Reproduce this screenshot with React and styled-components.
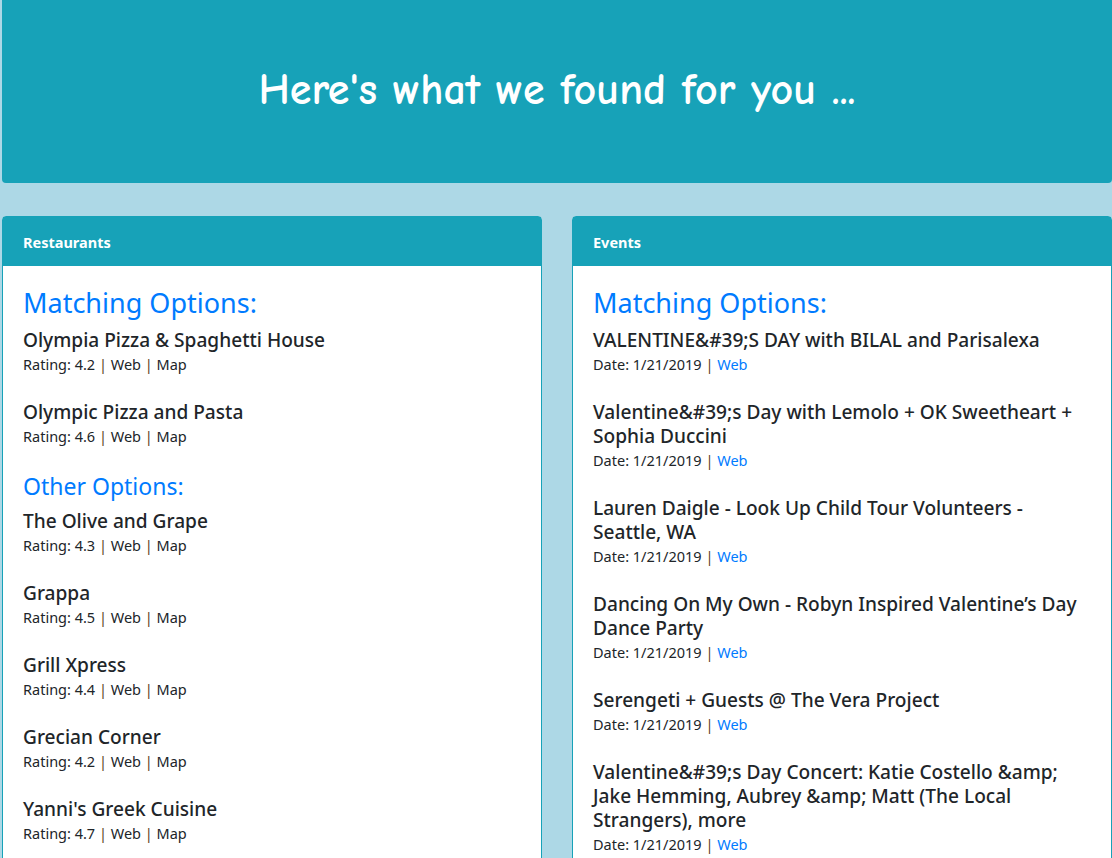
import styled, { createGlobalStyle } from "styled-components";

const GlobalStyle = createGlobalStyle`
  html, body {
    margin: 0;
    padding: 0;
    background-color: lightblue;
  }
  body {
    font-family: "Noto Sans", "Open Sans", sans-serif;
    color: #212529;
  }
`;

const Page = styled.div`
  padding: 0 0 0 2px;
  width: 1110px;
`;

const Jumbotron = styled.header`
  height: 183px;
  background-color: #17a2b8;
  border-radius: 0 0 4px 4px;
  display: flex;
  align-items: center;
  justify-content: center;
  margin-bottom: 33px;
`;

const Title = styled.h1`
  margin: 0 0 4px 0;
  color: white;
  font-family: "Comic Sans MS", "Comic Neue", "DejaVu Sans", sans-serif;
  font-weight: 700;
  font-size: 44px;
`;

const Columns = styled.div`
  display: grid;
  grid-template-columns: 540px 540px;
  gap: 30px;
`;

const Card = styled.section`
  background: white;
  border: 1px solid #17a2b8;
  border-radius: 4px 4px 0 0;
`;

const CardHeader = styled.div`
  background-color: #17a2b8;
  color: white;
  font-weight: 700;
  font-size: 14.5px;
  height: 49px;
  padding: 0 20px;
  display: flex;
  align-items: center;
`;

const CardBody = styled.div`
  padding: 20px 20px 40px;
`;

const SectionTitle = styled.h3`
  margin: 0 0 8px;
  color: #007bff;
  font-weight: 400;
  font-size: ${(p) => (p.$small ? "23px" : "27px")};
  line-height: ${(p) => (p.$small ? "29px" : "34px")};
`;

const Item = styled.div`
  margin-bottom: 24px;
`;

const ItemName = styled.h5`
  margin: 0;
  font-size: 19.1px;
  font-weight: 500;
  line-height: 24px;
`;

const Meta = styled.div`
  font-size: 14.5px;
  line-height: 24px;
  color: #212529;
`;

const Link = styled.a`
  color: ${(p) => (p.$blue ? "#007bff" : "#212529")};
  text-decoration: none;
`;

const Sep = styled.span`
  color: #5a3e1a;
`;

const matching = [
  { name: "Olympia Pizza & Spaghetti House", rating: "4.2" },
  { name: "Olympic Pizza and Pasta", rating: "4.6" },
];

const others = [
  { name: "The Olive and Grape", rating: "4.3" },
  { name: "Grappa", rating: "4.5" },
  { name: "Grill Xpress", rating: "4.4" },
  { name: "Grecian Corner", rating: "4.2" },
  { name: "Yanni's Greek Cuisine", rating: "4.7" },
  { name: "Mediterranean Kitchen", rating: "4.3" },
];

const events = [
  "VALENTINE&#39;S DAY with BILAL and Parisalexa",
  "Valentine&#39;s Day with Lemolo + OK Sweetheart + Sophia Duccini",
  "Lauren Daigle - Look Up Child Tour Volunteers - Seattle, WA",
  "Dancing On My Own - Robyn Inspired Valentine’s Day Dance Party",
  "Serengeti + Guests @ The Vera Project",
  "Valentine&#39;s Day Concert: Katie Costello &amp; Jake Hemming, Aubrey &amp; Matt (The Local Strangers), more",
  "Valentine&#39;s Day Dance Party",
];

function Restaurant({ name, rating }) {
  return (
    <Item>
      <ItemName>{name}</ItemName>
      <Meta>
        Rating: {rating} <Sep>|</Sep> <Link href="#">Web</Link> <Sep>|</Sep>{" "}
        <Link href="#">Map</Link>
      </Meta>
    </Item>
  );
}

function Event({ name }) {
  return (
    <Item>
      <ItemName>{name}</ItemName>
      <Meta>
        Date: 1/21/2019 <Sep>|</Sep> <Link $blue href="#">Web</Link>
      </Meta>
    </Item>
  );
}

export default function App() {
  return (
    <>
      <GlobalStyle />
      <Page>
        <Jumbotron>
          <Title>Here's what we found for you ...</Title>
        </Jumbotron>
        <Columns>
          <Card>
            <CardHeader>Restaurants</CardHeader>
            <CardBody>
              <SectionTitle>Matching Options:</SectionTitle>
              {matching.map((r) => (
                <Restaurant key={r.name} {...r} />
              ))}
              <SectionTitle $small>Other Options:</SectionTitle>
              {others.map((r) => (
                <Restaurant key={r.name} {...r} />
              ))}
            </CardBody>
          </Card>
          <Card>
            <CardHeader>Events</CardHeader>
            <CardBody>
              <SectionTitle>Matching Options:</SectionTitle>
              {events.map((e) => (
                <Event key={e} name={e} />
              ))}
            </CardBody>
          </Card>
        </Columns>
      </Page>
    </>
  );
}
